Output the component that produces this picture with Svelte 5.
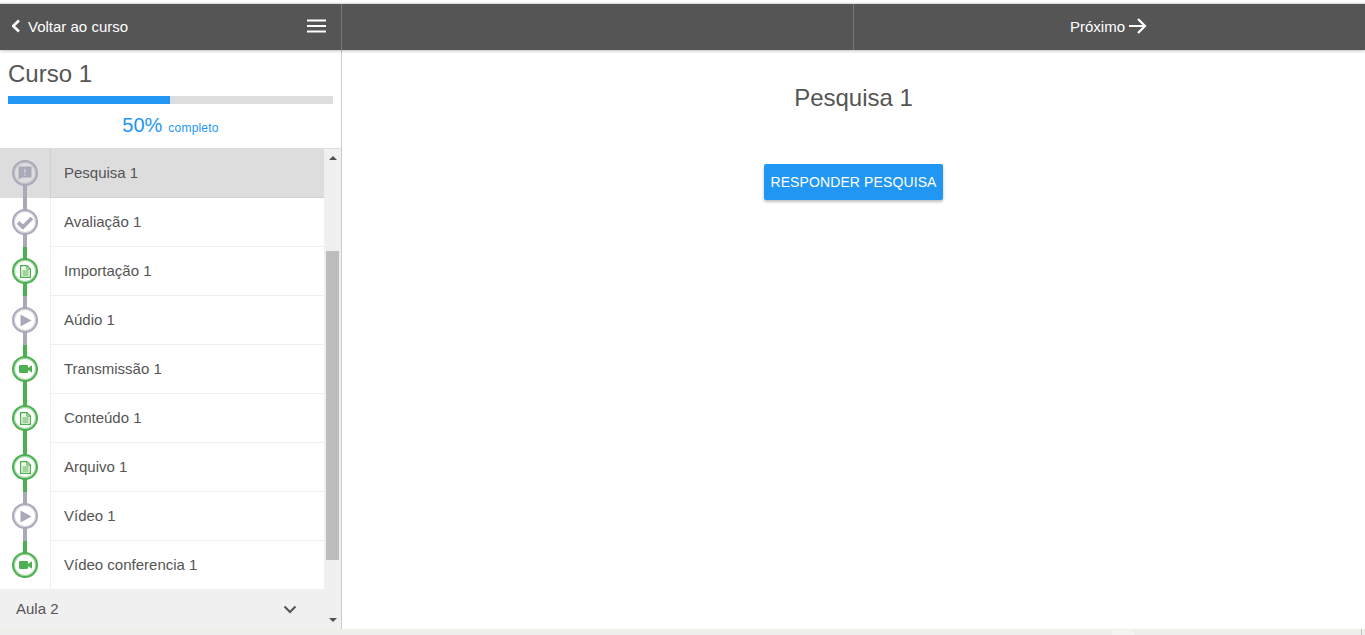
<script>
  const rows = [
    { name: 'Pesquisa 1', icon: 'chat', done: false, active: true },
    { name: 'Avaliação 1', icon: 'check', done: false },
    { name: 'Importação 1', icon: 'doc', done: true },
    { name: 'Aúdio 1', icon: 'play', done: false },
    { name: 'Transmissão 1', icon: 'cam', done: true },
    { name: 'Conteúdo 1', icon: 'doc', done: true },
    { name: 'Arquivo 1', icon: 'doc', done: true },
    { name: 'Vídeo 1', icon: 'play', done: false },
    { name: 'Vídeo conferencia 1', icon: 'cam', done: true }
  ];
</script>

<div class="page">
  <header class="bar">
    <div class="bar-left">
      <a class="back">
        <svg width="10" height="14" viewBox="0 0 10 14"><path d="M7 1.500 1.200 7 7 12.500" fill="none" stroke="#fff" stroke-width="2.600"/></svg>
        <span>Voltar ao curso</span>
      </a>
      <svg class="burger" width="19" height="14" viewBox="0 0 19 14"><path d="M0 1.500h19M0 7h19M0 12.500h19" stroke="#fff" stroke-width="2"/></svg>
    </div>
    <div class="bar-mid"></div>
    <div class="bar-right">
      <span>Próximo</span>
      <svg width="18" height="16" viewBox="0 0 18 16"><path d="M0 8h16M9 1l7 7-7 7" fill="none" stroke="#fff" stroke-width="2.200"/></svg>
    </div>
  </header>

  <div class="body">
    <aside class="side">
      <div class="course">
        <h1>Curso 1</h1>
        <div class="track"><div class="fill"></div></div>
        <p class="pct"><span class="num">50%</span><span class="word">completo</span></p>
      </div>
      <div class="scroller">
        <div class="list">
          <ul>
            {#each rows as r}
              <li class:active={r.active} class:done={r.done}>
                <div class="node">
                  <span class="dot">
                    {#if r.icon === 'chat'}
                      <svg width="14" height="14" viewBox="0 0 14 14"><path d="M1.500 .5h11a1 1 0 0 1 1 1v9a1 1 0 0 1-1 1H4L.5 13.500V1.500a1 1 0 0 1 1-1z" fill="#a9a9ba"/><path d="M7 3v4M7 8v1.500" stroke="#e4e4e4" stroke-width="1"/></svg>
                    {:else if r.icon === 'check'}
                      <svg width="18" height="15" viewBox="0 0 18 15"><path d="M2 7.500l4.800 4.500L16 3" fill="none" stroke="#a9a9ba" stroke-width="3.800"/></svg>
                    {:else if r.icon === 'doc'}
                      <svg width="11" height="13" viewBox="0 0 11 13"><path d="M.6 .6h6.400l3.400 3.400v8.400H.6z" fill="#f4f9e8" stroke="#4caf50" stroke-width="1.200"/><path d="M6.800 .6v3.600h3.600" fill="none" stroke="#4caf50"/><path d="M2.500 6h6M2.500 8h6M2.500 10h6" stroke="#4caf50"/></svg>
                    {:else if r.icon === 'play'}
                      <svg class="play" width="12" height="13" viewBox="0 0 12 13"><path d="M.5 .5 11.500 6.500 .5 12.500z" fill="#a9a9ba"/></svg>
                    {:else}
                      <svg width="13" height="8" viewBox="0 0 13 8"><rect x="0" y="0" width="9" height="8" rx="1.200" fill="#4caf50"/><path d="M9 3 13 .3v7.400L9 5z" fill="#4caf50"/></svg>
                    {/if}
                  </span>
                </div>
                <div class="label">{r.name}</div>
              </li>
            {/each}
          </ul>
          <div class="lesson">
            <span>Aula 2</span>
            <svg width="14" height="9" viewBox="0 0 14 9"><path d="M1.500 1.500 7 7l5.500-5.500" fill="none" stroke="#555" stroke-width="2"/></svg>
          </div>
        </div>
        <div class="sbar">
          <i class="arrow up"></i>
          <div class="thumb"></div>
          <i class="arrow down"></i>
        </div>
      </div>
    </aside>
    <main class="content">
      <h2>Pesquisa 1</h2>
      <button>RESPONDER PESQUISA</button>
    </main>
  </div>
  <div class="foot"><i></i><b></b></div>
</div>

<style>
  :global(body) { margin: 0; background: #fff; }
  .page {
    height: 635px;
    overflow: hidden;
    display: flex;
    flex-direction: column;
    font-family: "Liberation Sans", Arial, sans-serif;
    color: #555;
    padding-top: 3px;
    box-sizing: border-box;
  }
  .bar {
    height: 47px;
    flex: none;
    display: flex;
    background: #555;
    border-top: 1px solid #ddd;
    box-sizing: border-box;
    color: #fff;
    font-size: 15px;
    box-shadow: 0 1px 3px rgba(0,0,0,.25);
    position: relative;
  }
  .bar-left {
    width: 342px;
    box-sizing: border-box;
    display: flex;
    align-items: center;
    justify-content: space-between;
    padding: 0 15px 2px 12px;
    border-right: 1px solid #777;
    flex: none;
  }
  .back { display: flex; align-items: center; gap: 6px; }
  .bar-mid { width: 512px; flex: none; box-sizing: border-box; border-right: 1px solid #777; }
  .bar-right { flex: 1; display: flex; align-items: center; justify-content: center; gap: 4px; padding: 0 2px 2px 0; }
  .body { flex: 1; display: flex; min-height: 0; }
  .side {
    width: 342px;
    flex: none;
    box-sizing: border-box;
    border-right: 1px solid #ccc;
    display: flex;
    flex-direction: column;
  }
  .course { height: 99px; flex: none; box-sizing: border-box; padding: 11px 8px 0 8px; border-bottom: 1px solid #ddd; }
  h1 { margin: 0; font-size: 24px; font-weight: 400; line-height: 26px; }
  .track { height: 8px; background: #ddd; margin-top: 9px; }
  .fill { width: 162px; height: 100%; background: #2196f3; }
  .pct { margin: 8px 0 0; text-align: center; color: #2196f3; line-height: 26px; }
  .num { font-size: 20px; }
  .word { font-size: 12px; letter-spacing: .2px; margin-left: 6px; }
  .scroller { flex: 1; display: flex; min-height: 0; background: #f0f0f0; }
  .list { width: 324px; flex: none; display: flex; flex-direction: column; }
  ul { list-style: none; margin: 0; padding: 0; background: #fff; }
  li { height: 49px; box-sizing: border-box; display: flex; font-size: 15px; }
  li:last-child { height: 48px; }
  li.active { background: #ddd; }
  .node {
    width: 51px;
    flex: none;
    box-sizing: border-box;
    border-right: 1px solid #eee;
    position: relative;
    display: flex;
    align-items: center;
    justify-content: center;
    padding-bottom: 1px;
  }
  li:last-child .node { padding-bottom: 0; }
  li.active .node { border-right-color: #d0d0d0; }
  .node::before {
    content: "";
    position: absolute;
    left: 23px;
    top: 0;
    bottom: 0;
    width: 4px;
    background: #a9a9ba;
  }
  li.done .node::before { background: #4caf50; }
  li:first-child .node::before { top: 50%; }
  li:last-child .node::before { bottom: 50%; }
  .dot {
    position: relative;
    width: 26px;
    height: 26px;
    box-sizing: border-box;
    border-radius: 50%;
    border: 2px solid #a9a9ba;
    box-shadow: inset 0 0 0 1px rgba(169,169,186,.5);
    background: #fff;
    display: flex;
    align-items: center;
    justify-content: center;
  }
  .play { margin-left: 2px; }
  li.active .dot { background: #ddd; }
  li.done .dot { border-color: #4caf50; box-shadow: inset 0 0 0 1px rgba(76,175,80,.5); }
  .label {
    flex: 1;
    display: flex;
    align-items: center;
    padding: 0 0 1px 13px;
    border-bottom: 1px solid #eee;
    box-sizing: border-box;
  }
  li.active .label { border-bottom-color: #d0d0d0; }
  li:last-child .label { border-bottom: 0; padding-bottom: 1px; }
  .lesson {
    height: 40px;
    flex: none;
    box-sizing: border-box;
    display: flex;
    align-items: center;
    justify-content: space-between;
    padding: 0 27px 2px 16px;
    font-size: 15px;
  }
  .lesson svg { margin-top: 2px; }
  .sbar { width: 17px; flex: none; display: flex; flex-direction: column; align-items: center; }
  .arrow { width: 0; height: 0; border-left: 4px solid transparent; border-right: 4px solid transparent; }
  .up { border-bottom: 4px solid #505050; margin-top: 7px; }
  .down { border-top: 4px solid #505050; margin-top: 58px; }
  .thumb { width: 13px; height: 309px; background: #bdbdbd; margin-top: 91px; }
  .content { flex: 1; display: flex; flex-direction: column; align-items: center; }
  h2 { margin: 34px 0 0; font-size: 24px; font-weight: 400; line-height: 28px; }
  button {
    margin-top: 52px;
    width: 179px;
    height: 36px;
    border: 0;
    padding: 0;
    border-radius: 2px;
    background: #2196f3;
    color: #fff;
    font: 14px "Liberation Sans", Arial, sans-serif;
    letter-spacing: .11px;
    box-shadow: 0 2px 3px rgba(0,0,0,.25);
  }
  .foot { height: 6px; flex: none; background: #eeeeea; position: relative; }
  .foot i { position: absolute; left: 1112px; width: 22px; top: 1px; bottom: 0; background: #f4f4f1; }
  .foot b { position: absolute; left: 1361px; width: 1px; top: 0; bottom: 0; background: #c4c4c4; }
</style>
